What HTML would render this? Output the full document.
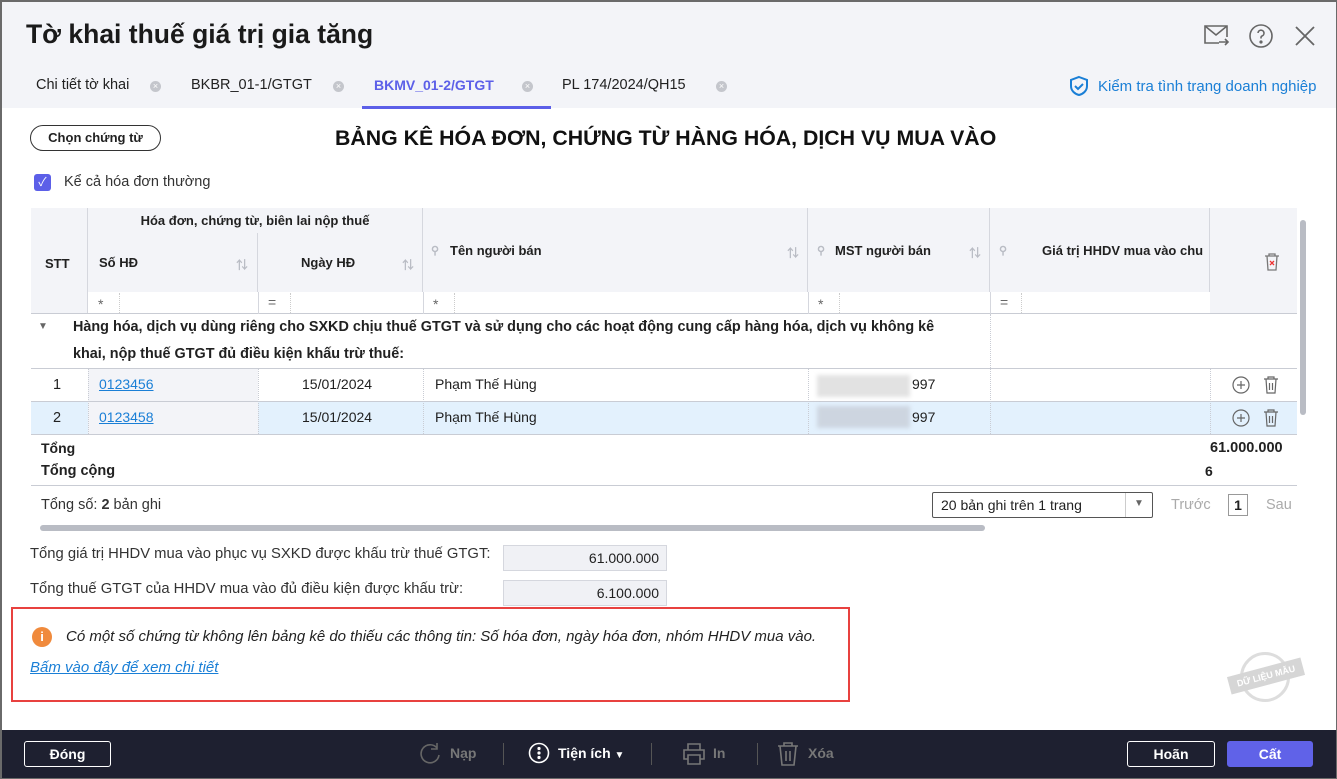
<!DOCTYPE html>
<html><head><meta charset="utf-8"><style>
*{box-sizing:border-box;margin:0;padding:0}
body{width:1337px;height:779px;overflow:hidden;font-family:"Liberation Sans","Noto Sans CJK SC",sans-serif;color:#212121;font-size:14px;background:#fff;position:relative}
.a{position:absolute;white-space:nowrap}
.frame{position:absolute;left:0;top:0;width:1337px;height:779px;border:1px solid #6a6a6a;border-left-width:2px;border-top-width:2px;pointer-events:none;z-index:10}
.hdr{position:absolute;left:0;top:0;width:1337px;height:108px;background:#f3f4f8}
.th{position:absolute;background:#f3f4f8;border-right:1px solid #d5d7de;border-bottom:1px solid #c9ccd4;font-weight:bold;font-size:13px;color:#212121}
.tb{font-weight:bold}
.sort{color:#b9bcc4;font-size:12px}
.pin{color:#b9bcc4;font-size:11px}
.foot{position:absolute;left:0;top:730px;width:1337px;height:49px;background:#1e2030}
.btn{position:absolute;border:1px solid #fff;border-radius:3px;color:#fff;font-weight:bold;font-size:14px;text-align:center;line-height:24px;height:26px}
.tab{font-size:14.5px}
.x{position:absolute;width:11px;height:11px;border-radius:50%;background:#c4c6cc;color:#fff;font-size:9px;text-align:center;line-height:11px}
</style></head><body>
<div class="hdr"></div>
<div class="a" style="left:26px;top:19px;font-size:26.5px;font-weight:bold;color:#1a1a1a">Tờ khai thuế giá trị gia tăng</div>
<svg class="a" style="left:1203px;top:24px" width="28" height="24" viewBox="0 0 28 24" fill="none" stroke="#666" stroke-width="1.6"><path d="M16 19H2V2h22v11"/><path d="M2 2l11 9 11-9"/><path d="M16 18h9M22 15l3 3-3 3"/></svg>
<svg class="a" style="left:1248px;top:23px" width="26" height="26" viewBox="0 0 26 26" fill="none" stroke="#666" stroke-width="1.6"><circle cx="13" cy="13" r="11"/><path d="M10 10a3 3 0 1 1 4 3c-1 .5-1 1-1 2.5"/><circle cx="13" cy="19" r=".8" fill="#666"/></svg>
<svg class="a" style="left:1294px;top:25px" width="22" height="22" viewBox="0 0 22 22" stroke="#666" stroke-width="1.8"><path d="M2 2l18 18M20 2L2 20"/></svg>
<div class="a tab" style="left:36px;top:77px">Chi tiết tờ khai</div>
<div class="x" style="left:150px;top:81px">×</div>
<div class="a tab" style="left:191px;top:77px">BKBR_01-1/GTGT</div>
<div class="x" style="left:333px;top:81px">×</div>
<div class="a tab" style="left:374px;top:77px;color:#5c5fe8;font-weight:bold;font-size:14px">BKMV_01-2/GTGT</div>
<div class="x" style="left:522px;top:81px">×</div>
<div class="a" style="left:362px;top:106px;width:189px;height:3px;background:#5c5fe8"></div>
<div class="a tab" style="left:562px;top:77px">PL 174/2024/QH15</div>
<div class="x" style="left:716px;top:81px">×</div>
<svg class="a" style="left:1068px;top:75px" width="22" height="22" viewBox="0 0 22 22" fill="none" stroke="#1a7fd6" stroke-width="2"><path d="M11 2l8 3v6c0 5-4 8-8 9-4-1-8-4-8-9V5z"/><path d="M7 11l3 3 5-5"/></svg>
<div class="a" style="left:1098px;top:78px;font-size:15px;color:#1a7fd6">Kiểm tra tình trạng doanh nghiệp</div>
<div class="a" style="left:30px;top:125px;width:131px;height:26px;border:1px solid #333;border-radius:13px;text-align:center;line-height:24px;font-size:13px;font-weight:bold">Chọn chứng từ</div>
<div class="a" style="left:335px;top:126px;font-size:21.3px;font-weight:bold;color:#111">BẢNG KÊ HÓA ĐƠN, CHỨNG TỪ HÀNG HÓA, DỊCH VỤ MUA VÀO</div>
<div class="a" style="left:34px;top:174px;width:17px;height:17px;border-radius:3px;background:#5c5fe8;color:#fff;font-size:12px;text-align:center;line-height:17px">✓</div>
<div class="a" style="left:64px;top:174px;font-size:14.5px;color:#333">Kể cả hóa đơn thường</div>
<div class="th" style="left:31px;top:208px;width:57px;height:106px;border-bottom:none"><span class="a" style="left:14px;top:48px">STT</span></div>
<div class="th" style="left:88px;top:208px;width:335px;height:26px;text-align:center;line-height:26px">Hóa đơn, chứng từ, biên lai nộp thuế</div>
<div class="th" style="left:88px;top:233px;width:170px;height:60px"><span class="a" style="left:11px;top:22px">Số HĐ</span><span class="a sort" style="left:148px;top:23px">⇅</span></div>
<div class="th" style="left:258px;top:233px;width:165px;height:60px"><span class="a" style="left:43px;top:22px">Ngày HĐ</span><span class="a sort" style="left:144px;top:23px">⇅</span></div>
<div class="th" style="left:423px;top:208px;width:385px;height:85px"><span class="a pin" style="left:8px;top:36px">⚲</span><span class="a" style="left:27px;top:35px">Tên người bán</span><span class="a sort" style="left:364px;top:36px">⇅</span></div>
<div class="th" style="left:808px;top:208px;width:182px;height:85px"><span class="a pin" style="left:9px;top:36px">⚲</span><span class="a" style="left:27px;top:35px">MST người bán</span><span class="a sort" style="left:161px;top:36px">⇅</span></div>
<div class="th" style="left:990px;top:208px;width:220px;height:85px;overflow:hidden"><span class="a pin" style="left:9px;top:36px">⚲</span><span class="a" style="left:52px;top:35px">Giá trị HHDV mua vào chu</span></div>
<div class="th" style="left:1210px;top:208px;width:87px;height:106px;border-right:none;border-bottom:none"></div>
<svg class="a" style="left:1264px;top:252px" width="16" height="20" viewBox="0 0 16 20" fill="none" stroke="#777" stroke-width="1.3"><path d="M1 4h14M5 4V2h6v2M3 4l1 14h8l1-14"/><path d="M6 9l4 4M10 9l-4 4" stroke="#e33"/></svg>
<div class="a" style="left:88px;top:292px;width:1122px;height:22px;background:#fff;border-bottom:1px solid #c9ccd4"></div>
<div class="a" style="left:31px;top:313px;width:1266px;height:1px;background:#c9ccd4"></div>
<div class="a" style="left:98px;top:296px;color:#666">*</div><div class="a" style="left:119px;top:293px;width:1px;height:20px;border-left:1px dotted #ccc"></div>
<div class="a" style="left:258px;top:292px;width:1px;height:22px;background:#d5d7de"></div>
<div class="a" style="left:268px;top:294px;color:#666">=</div><div class="a" style="left:290px;top:293px;width:1px;height:20px;border-left:1px dotted #ccc"></div>
<div class="a" style="left:423px;top:292px;width:1px;height:22px;background:#d5d7de"></div>
<div class="a" style="left:433px;top:296px;color:#666">*</div><div class="a" style="left:454px;top:293px;width:1px;height:20px;border-left:1px dotted #ccc"></div>
<div class="a" style="left:808px;top:292px;width:1px;height:22px;background:#d5d7de"></div>
<div class="a" style="left:818px;top:296px;color:#666">*</div><div class="a" style="left:839px;top:293px;width:1px;height:20px;border-left:1px dotted #ccc"></div>
<div class="a" style="left:990px;top:292px;width:1px;height:22px;background:#d5d7de"></div>
<div class="a" style="left:1000px;top:294px;color:#666">=</div><div class="a" style="left:1021px;top:293px;width:1px;height:20px;border-left:1px dotted #ccc"></div>
<div class="a" style="left:990px;top:314px;width:1px;height:54px;border-left:1px dotted #c9ccd4"></div>
<div class="a" style="left:38px;top:321px;font-size:10px;color:#666">▼</div>
<div class="a tb" style="left:73px;top:314px;font-size:14.4px;line-height:27px;white-space:normal;width:880px">Hàng hóa, dịch vụ dùng riêng cho SXKD chịu thuế GTGT và sử dụng cho các hoạt động cung cấp hàng hóa, dịch vụ không kê khai, nộp thuế GTGT đủ điều kiện khấu trừ thuế:</div>
<div class="a" style="left:31px;top:368px;width:1266px;height:1px;background:#c9ccd4"></div>
<div class="a" style="left:88px;top:369px;width:170px;height:32px;background:#f3f4f8"></div>
<div class="a" style="left:31px;top:401px;width:1266px;height:33px;background:#e3f1fd"></div>
<div class="a" style="left:88px;top:402px;width:170px;height:32px;background:#f3f4f8"></div>
<div class="a" style="left:31px;top:401px;width:1266px;height:1px;background:#c9ccd4"></div>
<div class="a" style="left:31px;top:434px;width:1266px;height:1px;background:#c9ccd4"></div>
<div class="a" style="left:88px;top:369px;height:65px;border-left:1px dotted #c9ccd4"></div>
<div class="a" style="left:258px;top:369px;height:65px;border-left:1px dotted #c9ccd4"></div>
<div class="a" style="left:423px;top:369px;height:65px;border-left:1px dotted #c9ccd4"></div>
<div class="a" style="left:808px;top:369px;height:65px;border-left:1px dotted #c9ccd4"></div>
<div class="a" style="left:990px;top:369px;height:65px;border-left:1px dotted #c9ccd4"></div>
<div class="a" style="left:1210px;top:369px;height:65px;border-left:1px dotted #c9ccd4"></div>
<div class="a" style="left:53px;top:377px;font-size:14.5px">1</div>
<div class="a" style="left:99px;top:376px;color:#1a7fd6;text-decoration:underline">0123456</div>
<div class="a" style="left:302px;top:376px">15/01/2024</div>
<div class="a" style="left:435px;top:376px">Phạm Thế Hùng</div>
<div class="a" style="left:817px;top:375px;width:93px;height:22px;background:#e2e2e2;filter:blur(2px)"></div>
<div class="a" style="left:817px;top:406px;width:93px;height:22px;background:#cdd5e0;filter:blur(2px)"></div>
<div class="a" style="left:912px;top:376px">997</div>
<div class="a" style="left:53px;top:410px;font-size:14.5px">2</div>
<div class="a" style="left:99px;top:409px;color:#1a7fd6;text-decoration:underline">0123458</div>
<div class="a" style="left:302px;top:409px">15/01/2024</div>
<div class="a" style="left:435px;top:409px">Phạm Thế Hùng</div>
<div class="a" style="left:912px;top:409px">997</div>
<svg class="a" style="left:1232px;top:376px" width="18" height="18" viewBox="0 0 18 18" fill="none" stroke="#666" stroke-width="1.2"><circle cx="9" cy="9" r="8"/><path d="M9 5v8M5 9h8"/></svg>
<svg class="a" style="left:1263px;top:375px" width="16" height="20" viewBox="0 0 16 20" fill="none" stroke="#666" stroke-width="1.2"><path d="M1 4h14M5 4V2h6v2M3 4l1 14h8l1-14M6.5 8v7M9.5 8v7"/></svg>
<svg class="a" style="left:1232px;top:409px" width="18" height="18" viewBox="0 0 18 18" fill="none" stroke="#666" stroke-width="1.2"><circle cx="9" cy="9" r="8"/><path d="M9 5v8M5 9h8"/></svg>
<svg class="a" style="left:1263px;top:408px" width="16" height="20" viewBox="0 0 16 20" fill="none" stroke="#666" stroke-width="1.2"><path d="M1 4h14M5 4V2h6v2M3 4l1 14h8l1-14M6.5 8v7M9.5 8v7"/></svg>
<div class="a tb" style="left:41px;top:440px">Tổng</div>
<div class="a tb" style="left:1210px;top:440px;font-size:14.5px">61.000.000</div>
<div class="a tb" style="left:41px;top:463px;font-size:14.5px">Tổng cộng</div>
<div class="a tb" style="left:1205px;top:463px;width:8px;overflow:hidden">6</div>
<div class="a" style="left:31px;top:485px;width:1266px;height:1px;background:#c9ccd4"></div>
<div class="a" style="left:41px;top:497px;color:#333;font-size:14.5px">Tổng số: <b>2</b> bản ghi</div>
<div class="a" style="left:932px;top:492px;width:221px;height:26px;border:1px solid #555;border-radius:2px;background:#fff"><span class="a" style="left:8px;top:4px">20 bản ghi trên 1 trang</span><span class="a" style="left:192px;top:0;height:24px;border-left:1px solid #ccc"></span><span class="a" style="left:201px;top:5px;font-size:10px;color:#666">▼</span></div>
<div class="a" style="left:1171px;top:497px;color:#aaa;font-size:14.5px">Trước</div>
<div class="a" style="left:1228px;top:494px;width:20px;height:22px;border:1px solid #999;text-align:center;line-height:20px;font-weight:bold">1</div>
<div class="a" style="left:1266px;top:497px;color:#aaa;font-size:14.5px">Sau</div>
<div class="a" style="left:40px;top:525px;width:945px;height:6px;border-radius:3px;background:#b9bcc4"></div>
<div class="a" style="left:1300px;top:220px;width:6px;height:195px;border-radius:3px;background:#b9bcc4"></div>
<div class="a" style="left:30px;top:546px;color:#333;font-size:14.8px">Tổng giá trị HHDV mua vào phục vụ SXKD được khấu trừ thuế GTGT:</div>
<div class="a" style="left:503px;top:545px;width:164px;height:26px;background:#f0f1f5;border:1px solid #d5d7de;text-align:right;padding-right:7px;line-height:24px">61.000.000</div>
<div class="a" style="left:30px;top:581px;color:#333;font-size:14.8px">Tổng thuế GTGT của HHDV mua vào đủ điều kiện được khấu trừ:</div>
<div class="a" style="left:503px;top:580px;width:164px;height:26px;background:#f0f1f5;border:1px solid #d5d7de;text-align:right;padding-right:7px;line-height:24px">6.100.000</div>
<div class="a" style="left:11px;top:607px;width:839px;height:95px;border:2px solid #e8413f"></div>
<div class="a" style="left:32px;top:627px;width:20px;height:20px;border-radius:50%;background:#f08a3c;color:#fff;font-weight:bold;font-size:13px;text-align:center;line-height:20px">i</div>
<div class="a" style="left:66px;top:628px;font-style:italic;color:#222;font-size:15px">Có một số chứng từ không lên bảng kê do thiếu các thông tin: Số hóa đơn, ngày hóa đơn, nhóm HHDV mua vào.</div>
<div class="a" style="left:30px;top:659px;font-style:italic;color:#1a7fd6;text-decoration:underline;font-size:15px">Bấm vào đây để xem chi tiết</div>
<div class="a" style="left:1240px;top:652px;width:50px;height:50px;border-radius:50%;border:3px solid #ddd"></div>
<div class="a" style="left:1228px;top:667px;width:76px;height:18px;background:#d6d6d6;color:#fff;font-size:9px;font-weight:bold;text-align:center;line-height:18px;transform:rotate(-15deg)">DỮ LIỆU MẪU</div>
<div class="foot"></div>
<div class="btn" style="left:24px;top:741px;width:87px">Đóng</div>
<svg class="a" style="left:419px;top:742px" width="22" height="24" viewBox="0 0 22 24" fill="none" stroke="#666" stroke-width="1.6"><path d="M18 6A9 9 0 1 0 20 13"/><path d="M18 1v6h-6"/></svg>
<div class="a" style="left:450px;top:745px;color:#777;font-weight:bold">Nạp</div>
<div class="a" style="left:503px;top:743px;width:1px;height:22px;background:#555"></div>
<svg class="a" style="left:528px;top:742px" width="22" height="22" viewBox="0 0 22 22" fill="none" stroke="#fff" stroke-width="1.6"><circle cx="11" cy="11" r="9.5"/><circle cx="11" cy="6.5" r=".8" fill="#fff"/><circle cx="11" cy="11" r=".8" fill="#fff"/><circle cx="11" cy="15.5" r=".8" fill="#fff"/></svg>
<div class="a" style="left:558px;top:745px;color:#fff;font-weight:bold">Tiện ích <span style="font-size:10px">▼</span></div>
<div class="a" style="left:651px;top:743px;width:1px;height:22px;background:#555"></div>
<svg class="a" style="left:682px;top:742px" width="24" height="24" viewBox="0 0 24 24" fill="none" stroke="#777" stroke-width="1.6"><path d="M6 8V2h12v6M6 17H2V8h20v9h-4M6 13h12v9H6z"/></svg>
<div class="a" style="left:713px;top:745px;color:#777;font-weight:bold">In</div>
<div class="a" style="left:757px;top:743px;width:1px;height:22px;background:#555"></div>
<svg class="a" style="left:777px;top:741px" width="22" height="26" viewBox="0 0 22 26" fill="none" stroke="#777" stroke-width="1.6"><path d="M1 5h20M7 5V2h8v3M3 5l2 19h12l2-19M9 10v10M13 10v10"/></svg>
<div class="a" style="left:808px;top:745px;color:#777;font-weight:bold">Xóa</div>
<div class="btn" style="left:1127px;top:741px;width:88px">Hoãn</div>
<div class="btn" style="left:1227px;top:741px;width:86px;background:#6062e8;border-color:#6062e8">Cất</div>
<div class="frame"></div>
</body></html>
